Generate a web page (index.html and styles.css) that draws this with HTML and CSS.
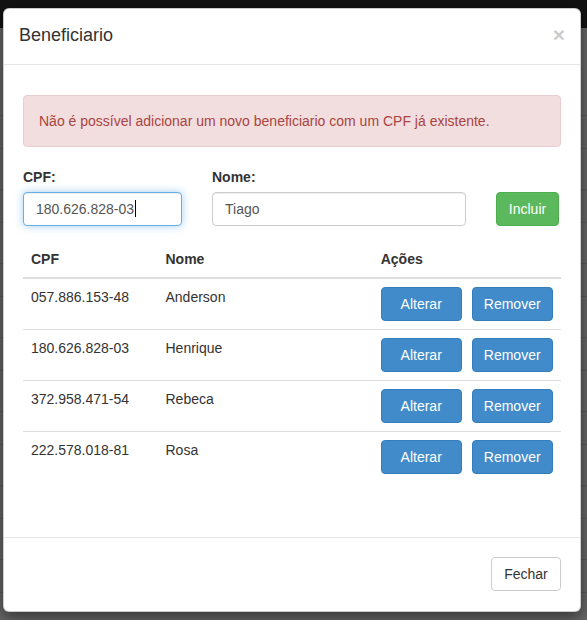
FILE: index.html
```html
<!DOCTYPE html>
<html lang="pt-BR">
<head>
<meta charset="utf-8">
<title>Beneficiario</title>
<link rel="stylesheet" href="styles.css">
</head>
<body>
<div class="page">
  <div class="navbar"></div>
  <div class="bg-rows">
    <div class="bg-row short"></div>
    <div class="bg-row tall"></div>
    <div class="bg-row short"></div>
    <div class="bg-row tall"></div>
    <div class="bg-row short"></div>
    <div class="bg-row tall"></div>
    <div class="bg-row short"></div>
    <div class="bg-row tall"></div>
    <div class="bg-row short"></div>
    <div class="bg-row tall"></div>
    <div class="bg-row short"></div>
    <div class="bg-row tall"></div>
    <div class="bg-row short"></div>
    <div class="bg-row tall"></div>
  </div>
</div>

<div class="modal">
  <div class="modal-header">
    <h4 class="modal-title">Beneficiario</h4>
    <button class="close" type="button">×</button>
  </div>
  <div class="modal-body">
    <div class="alert">Não é possível adicionar um novo beneficiario com um CPF já existente.</div>
    <div class="form-row">
      <div class="field field-cpf">
        <label class="label">CPF:</label>
        <div class="form-control is-focused">180.626.828-03<span class="caret"></span></div>
      </div>
      <div class="field field-nome">
        <label class="label">Nome:</label>
        <input class="form-control" type="text" value="Tiago">
      </div>
      <button class="btn btn-success btn-incluir" type="button">Incluir</button>
    </div>
    <table class="table">
      <thead>
        <tr>
          <th class="col-cpf">CPF</th>
          <th class="col-nome">Nome</th>
          <th class="col-acoes">Ações</th>
        </tr>
      </thead>
      <tbody>
        <tr>
          <td>057.886.153-48</td>
          <td>Anderson</td>
          <td><div class="actions"><button class="btn btn-primary">Alterar</button><button class="btn btn-primary">Remover</button></div></td>
        </tr>
        <tr>
          <td>180.626.828-03</td>
          <td>Henrique</td>
          <td><div class="actions"><button class="btn btn-primary">Alterar</button><button class="btn btn-primary">Remover</button></div></td>
        </tr>
        <tr>
          <td>372.958.471-54</td>
          <td>Rebeca</td>
          <td><div class="actions"><button class="btn btn-primary">Alterar</button><button class="btn btn-primary">Remover</button></div></td>
        </tr>
        <tr>
          <td>222.578.018-81</td>
          <td>Rosa</td>
          <td><div class="actions"><button class="btn btn-primary">Alterar</button><button class="btn btn-primary">Remover</button></div></td>
        </tr>
      </tbody>
    </table>
  </div>
  <div class="modal-footer">
    <button class="btn btn-default" type="button">Fechar</button>
  </div>
</div>
</body>
</html>
```

FILE: styles.css
```css
* {
  box-sizing: border-box;
}

html, body {
  margin: 0;
  padding: 0;
}

body {
  width: 587px;
  height: 620px;
  overflow: hidden;
  background: #666666;
  font-family: "Liberation Sans", Arial, Helvetica, sans-serif;
  font-size: 14px;
  line-height: 20px;
  color: #333333;
}

/* ---------- dimmed page behind the modal ---------- */
.page {
  height: 620px;
}

.navbar {
  height: 28px;
  background: #121212;
}

.bg-rows {
  padding-top: 87px;
}

.bg-row {
  border-top: 1px solid #5a5a5a;
}

.bg-row.short {
  height: 33px;
}

.bg-row.tall {
  height: 41px;
}

/* ---------- modal ---------- */
.modal {
  position: absolute;
  left: 3px;
  top: 8px;
  width: 578px;
  background: #ffffff;
  border: 1px solid rgba(0, 0, 0, 0.2);
  border-radius: 6px;
  box-shadow: 0 5px 15px rgba(0, 0, 0, 0.5);
  overflow: hidden;
}

.modal-header {
  display: flex;
  justify-content: space-between;
  align-items: flex-start;
  padding: 13px 15px 16px;
  border-bottom: 1px solid #e5e5e5;
}

.modal-title {
  margin: 0;
  font-size: 18px;
  font-weight: 500;
  line-height: 26px;
  color: #333333;
}

.close {
  margin: 2px 0 0;
  padding: 0;
  border: 0;
  background: transparent;
  font-family: "Liberation Sans", Arial, sans-serif;
  font-size: 21px;
  font-weight: bold;
  line-height: 21px;
  color: #000000;
  opacity: 0.2;
  cursor: pointer;
}

.modal-body {
  padding: 30px 19px 55px;
}

.alert {
  padding: 15px;
  border: 1px solid #ebccd1;
  border-radius: 4px;
  background: #f2dede;
  color: #a94442;
  margin-bottom: 20px;
}

.form-row {
  display: flex;
  align-items: flex-end;
  margin-bottom: 15px;
}

.field-cpf {
  width: 159px;
  margin-right: 30px;
}

.field-nome {
  width: 254px;
  margin-right: 30px;
}

.label {
  display: block;
  font-weight: bold;
  margin-bottom: 5px;
}

.form-control {
  display: block;
  width: 100%;
  height: 34px;
  padding: 6px 12px;
  font-family: "Liberation Sans", Arial, sans-serif;
  font-size: 14px;
  line-height: 20px;
  color: #555555;
  background: #ffffff;
  border: 1px solid #cccccc;
  border-radius: 4px;
  box-shadow: inset 0 1px 1px rgba(0, 0, 0, 0.075);
  outline: none;
  margin: 0;
}

.form-control.is-focused {
  border-color: #66afe9;
  box-shadow: inset 0 1px 1px rgba(0, 0, 0, 0.075), 0 0 8px rgba(102, 175, 233, 0.6);
}

.caret {
  display: inline-block;
  width: 1px;
  height: 17px;
  margin-left: 1px;
  vertical-align: -3px;
  background: #000000;
}

.btn {
  display: inline-block;
  height: 34px;
  padding: 6px 12px;
  font-family: "Liberation Sans", Arial, sans-serif;
  font-size: 14px;
  line-height: 20px;
  text-align: center;
  border: 1px solid transparent;
  border-radius: 4px;
  cursor: pointer;
  margin: 0;
}

.btn-success {
  color: #ffffff;
  background: #5cb85c;
  border-color: #4cae4c;
}

.btn-incluir {
  width: 63px;
  padding: 6px 0;
}

.btn-primary {
  width: 81px;
  padding: 6px 0;
  color: #ffffff;
  background: #428bca;
  border-color: #357ebd;
}

.btn-default {
  color: #333333;
  background: #ffffff;
  border-color: #cccccc;
}

/* ---------- table ---------- */
.table {
  width: 100%;
  border-collapse: collapse;
  border-spacing: 0;
  table-layout: fixed;
}

.table th {
  padding: 8px;
  text-align: left;
  font-weight: bold;
  vertical-align: bottom;
  border-bottom: 2px solid #dddddd;
}

.table td {
  padding: 8px;
  vertical-align: top;
  border-top: 1px solid #dddddd;
}

.col-cpf {
  width: 25%;
}

.col-nome {
  width: 40%;
}

.col-acoes {
  width: 35%;
}

.actions {
  display: flex;
  gap: 10px;
}

/* ---------- footer ---------- */
.modal-footer {
  display: flex;
  justify-content: flex-end;
  padding: 19px 19px 20px;
  border-top: 1px solid #e5e5e5;
}

.modal-footer .btn-default {
  width: 70px;
  padding: 6px 0;
}
```
